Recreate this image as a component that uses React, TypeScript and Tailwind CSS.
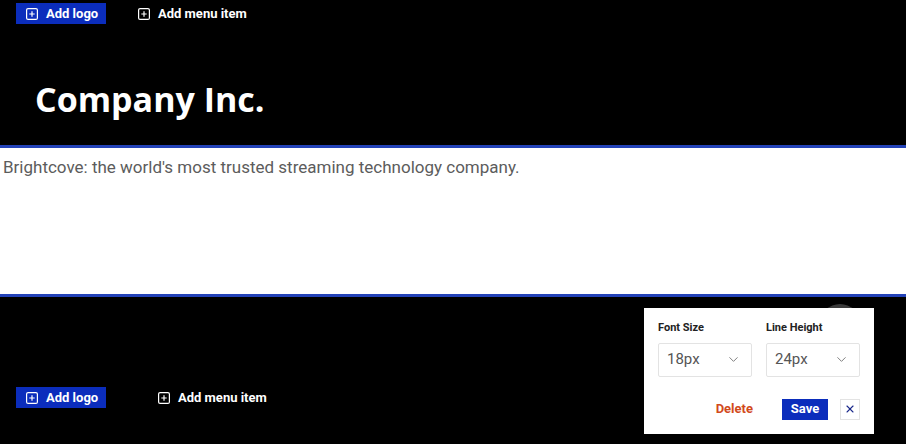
import { ChevronDown, X } from "lucide-react";

const PlusBox = () => (
  <svg width="12" height="12" viewBox="0 0 12 12" fill="none" stroke="currentColor" strokeWidth="1.2">
    <rect x="0.6" y="0.6" width="10.8" height="10.8" rx="1.5" />
    <path d="M6 3.3v5.4M3.3 6h5.4" />
  </svg>
);

const Toolbar = ({ menuGap }: { menuGap: string }) => (
  <div className={`flex items-center ${menuGap}`}>
    <button className="flex items-center gap-[8px] h-[21px] w-[90px] pl-[10px] bg-[#0b2dbc] text-white text-[13px] font-bold">
      <PlusBox />
      Add logo
    </button>
    <button className="flex items-center gap-[8px] text-white text-[13px] font-bold">
      <PlusBox />
      Add menu item
    </button>
  </div>
);

const Select = ({ value }: { value: string }) => (
  <div className="flex items-center justify-between h-[34px] w-[94px] pl-[8px] pr-[10px] border border-[#e3e3e3] rounded-[2px] text-[15px] text-[#555]">
    <span>{value}</span>
    <ChevronDown size={15} strokeWidth={1.5} className="text-[#777]" />
  </div>
);

export default function App() {
  const font = { fontFamily: "Roboto, 'Noto Sans', sans-serif" };
  return (
    <div className="w-[906px] h-[444px] overflow-hidden bg-black relative" style={font}>
      <header className="h-[145px] bg-black flex flex-col pt-[3px] pl-[16px]">
        <Toolbar menuGap="gap-[32px]" />
        <h1
          className="mt-[53px] ml-[19px] text-white text-[34px] font-bold leading-[44px]"
          style={{ fontFamily: "'Open Sans', sans-serif" }}
        >
          Company Inc.
        </h1>
      </header>
      <section className="h-[152px] bg-white border-y-[3px] border-[#2342b8] pt-[8px] pl-[3px]">
        <p className="text-[17px] leading-[22px] text-[#5c5c5c]">
          Brightcove: the world's most trusted streaming technology company.
        </p>
      </section>
      <footer className="h-[147px] bg-black flex flex-col pl-[16px] pt-[90px]">
        <Toolbar menuGap="gap-[52px]" />
      </footer>

      <div className="absolute left-[820px] top-[304px] w-[40px] h-[40px] rounded-full bg-[#3a3a3a]" />

      <div className="absolute left-[644px] top-[308px] w-[230px] h-[126px] bg-white px-[14px] pt-[12px]">
        <div className="flex gap-[14px]">
          <div className="flex flex-col gap-[6px]">
            <span className="text-[11px] font-bold text-[#222]">Font Size</span>
            <Select value="18px" />
          </div>
          <div className="flex flex-col gap-[6px]">
            <span className="text-[11px] font-bold text-[#222]">Line Height</span>
            <Select value="24px" />
          </div>
        </div>
        <div className="flex items-center justify-end mt-[22px] gap-[12px]">
          <button className="text-[13px] font-bold text-[#d24a1c] mr-[17px]">Delete</button>
          <button className="h-[21px] w-[46px] bg-[#0b2dbc] text-white text-[13px] font-bold">Save</button>
          <button className="h-[21px] w-[20px] border border-[#e3e3e3] flex items-center justify-center text-[#1b2a8c]">
            <X size={12} strokeWidth={2.2} />
          </button>
        </div>
      </div>
    </div>
  );
}
